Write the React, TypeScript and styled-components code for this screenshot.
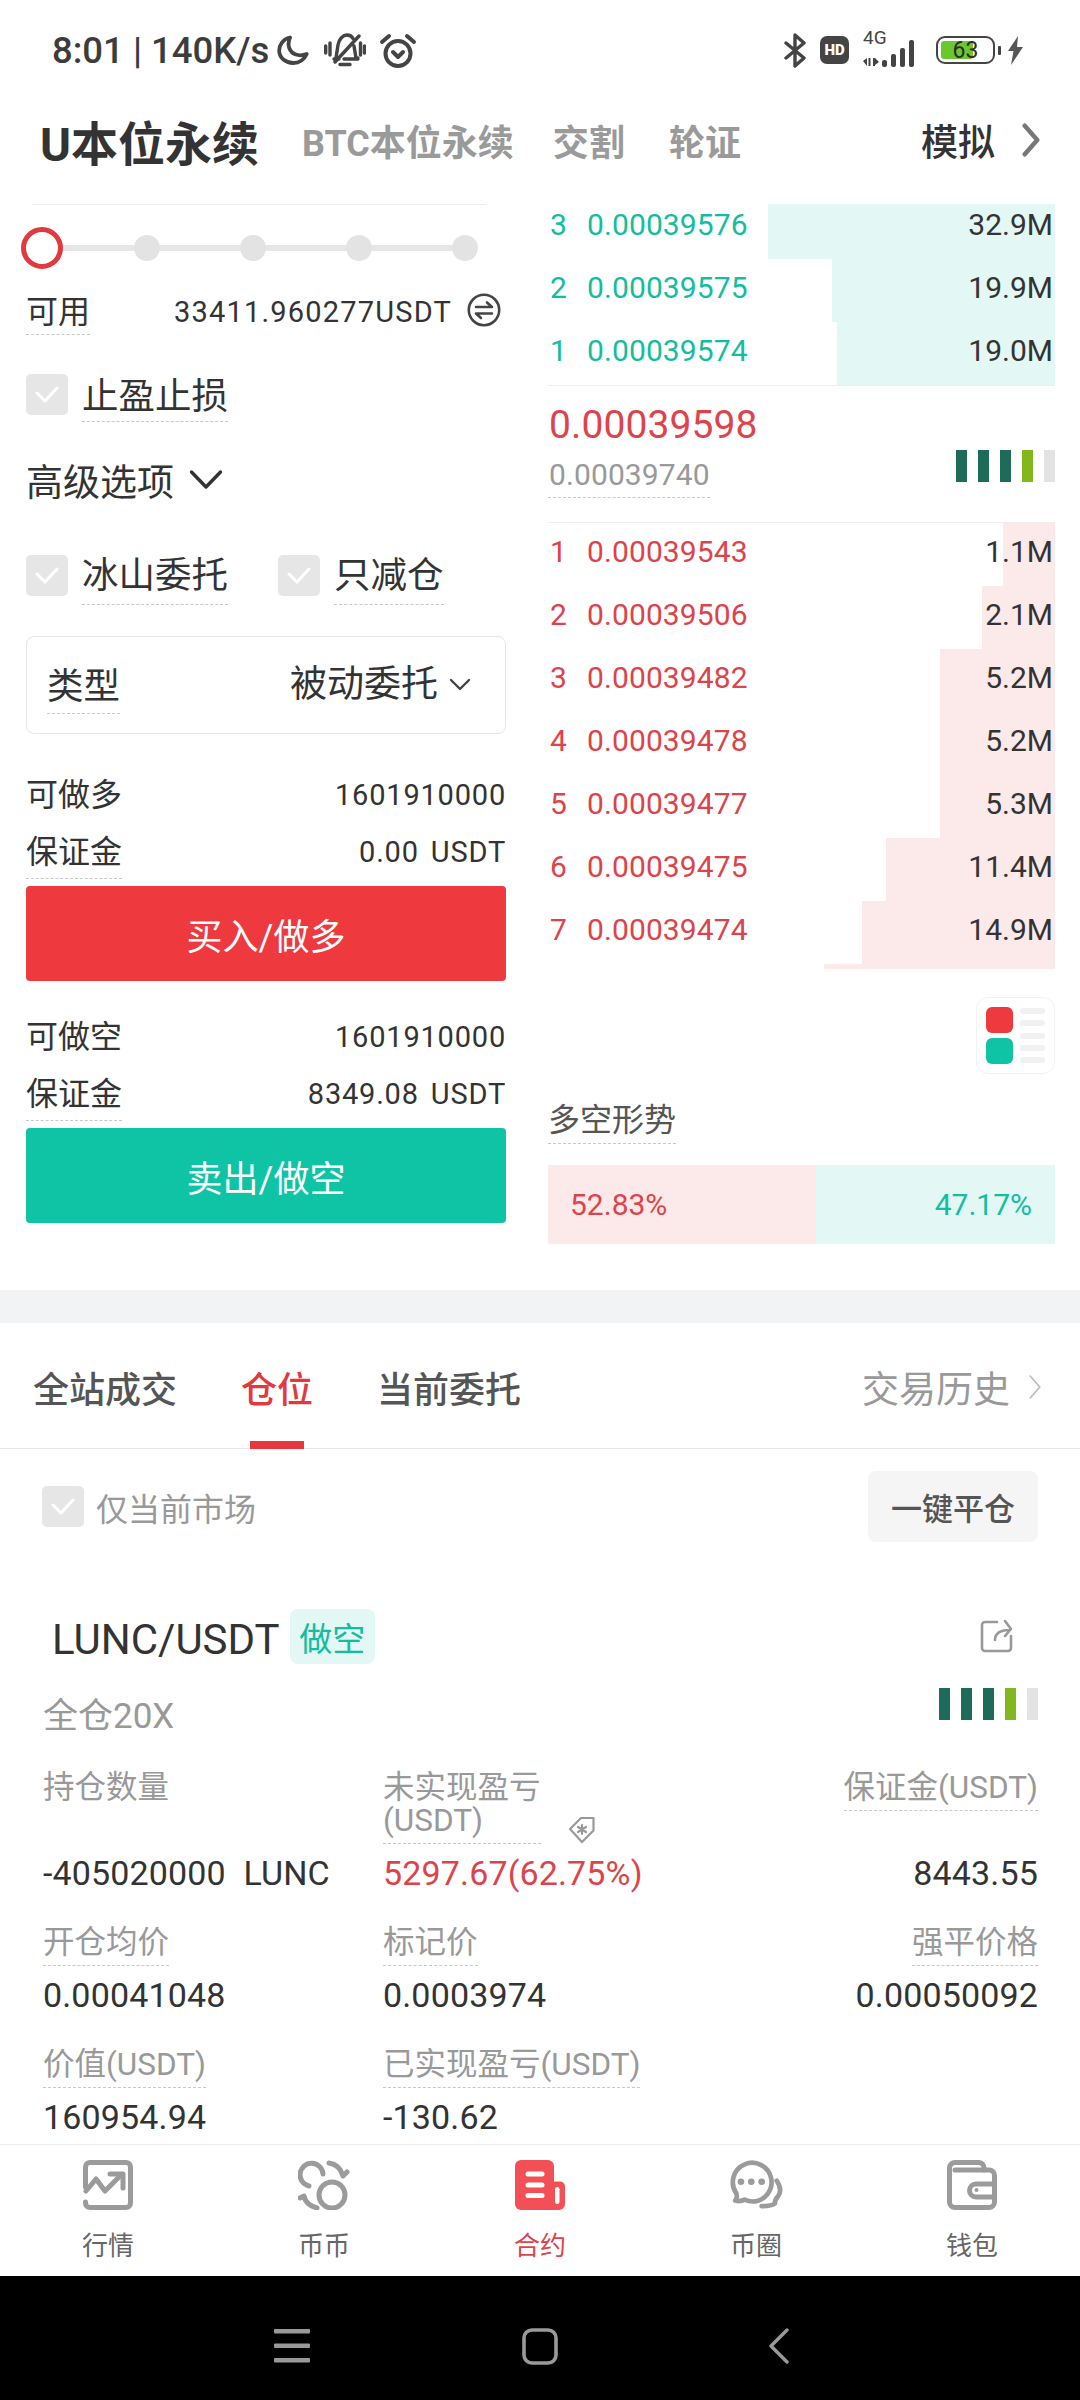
import { FC } from "react";
import styled, { createGlobalStyle } from "styled-components";

const red = "#dd434a";
const green = "#13bd9f";
const FONT = `Roboto, "Noto Sans CJK SC", sans-serif`;

const asks = [
  { n: 3, price: "0.00039576", vol: "32.9M", width: 287 },
  { n: 2, price: "0.00039575", vol: "19.9M", width: 223 },
  { n: 1, price: "0.00039574", vol: "19.0M", width: 218 },
];

const bids = [
  { n: 1, price: "0.00039543", vol: "1.1M", width: 52 },
  { n: 2, price: "0.00039506", vol: "2.1M", width: 73 },
  { n: 3, price: "0.00039482", vol: "5.2M", width: 115 },
  { n: 4, price: "0.00039478", vol: "5.2M", width: 115 },
  { n: 5, price: "0.00039477", vol: "5.3M", width: 115 },
  { n: 6, price: "0.00039475", vol: "11.4M", width: 169 },
  { n: 7, price: "0.00039474", vol: "14.9M", width: 193 },
];

const App: FC = () => {
  return (
    <Screen>
      <GlobalStyle />
      <StatusBar>
        <StatusLeft>
          <Clock>8:01 | 140K/s</Clock>
          <MoonIcon />
          <BellOffIcon />
          <AlarmIcon />
        </StatusLeft>
        <StatusRight>
          <BluetoothIcon />
          <HdBadge>HD</HdBadge>
          <Network>
            <NetLabel>4G</NetLabel>
            <SignalIcon />
          </Network>
          <Battery>
            <BatteryFill />
            <BatteryText>63</BatteryText>
          </Battery>
          <BatteryNub />
          <BoltIcon />
        </StatusRight>
      </StatusBar>

      <Header>
        <HeaderTitle>U本位永续</HeaderTitle>
        <HeaderTab>BTC本位永续</HeaderTab>
        <HeaderTab $mr={44}>交割</HeaderTab>
        <HeaderTab>轮证</HeaderTab>
        <Demo>模拟</Demo>
        <Chevron size={34} color="#777" width={5} />
      </Header>

      <Main>
        <LeftCol>
          <TopRule />
          <Slider>
            <SliderTrack />
            <SliderRing />
            <SliderDot />
            <SliderDot />
            <SliderDot />
            <SliderDot />
          </Slider>
          <AvailRow>
            <Dashed $lh={44}>可用</Dashed>
            <AvailValue>33411.960277USDT</AvailValue>
            <SwapIcon />
          </AvailRow>
          <CheckRow $mt={37}>
            <CheckBox><CheckIcon /></CheckBox>
            <Dashed $lh={48}>止盈止损</Dashed>
          </CheckRow>
          <Advanced>
            高级选项
            <AdvancedChevron />
          </Advanced>
          <CheckRow $mt={47}>
            <CheckBox $mt={3}><CheckIcon /></CheckBox>
            <Dashed $lh={48} $pad={4}>冰山委托</Dashed>
            <CheckBox $mt={3} $ml={50}><CheckIcon /></CheckBox>
            <Dashed $lh={48} $pad={4}>只减仓</Dashed>
          </CheckRow>
          <SelectBox>
            <Dashed $lh={44} $pad={4}>类型</Dashed>
            <SelectValue>
              被动委托
              <SmallChevron />
            </SelectValue>
          </SelectBox>
          <TradeBlock label="可做多" amount="0.00 USDT" action="买入/做多" color="#ee3a3f" first />
          <TradeBlock label="可做空" amount="8349.08 USDT" action="卖出/做空" color="#0fc4a4" />
        </LeftCol>

        <RightCol>
          <AskClip>
            {asks.map((row) => (
              <BookRow key={row.n} row={row} color={green} bar="#e3f7f4" />
            ))}
          </AskClip>
          <MidPrice>
            <div>
              <LastPrice>0.00039598</LastPrice>
              <MarkPrice>0.00039740</MarkPrice>
            </div>
            <SignalBars />
          </MidPrice>
          <BidList>
            {bids.map((row) => (
              <BookRow key={row.n} row={row} color={red} bar="#fce9ea" />
            ))}
            <BidTail />
          </BidList>
          <LayoutButton>
            <LayoutSquares>
              <LayoutSquare $color="#ee3a3f" />
              <LayoutSquare $color="#0fc4a4" />
            </LayoutSquares>
            <LayoutLines>
              <LayoutLine />
              <LayoutLine />
              <LayoutLine />
              <LayoutLine />
              <LayoutLine />
            </LayoutLines>
          </LayoutButton>
          <TrendTitle>多空形势</TrendTitle>
          <TrendBar>
            <TrendLong>52.83%</TrendLong>
            <TrendShort>47.17%</TrendShort>
          </TrendBar>
        </RightCol>
      </Main>

      <Band />

      <Positions>
        <Tabs>
          <Tab>全站成交</Tab>
          <Tab $active>仓位</Tab>
          <Tab>当前委托</Tab>
          <History>交易历史</History>
          <Chevron size={26} color="#bbb" width={2.5} />
        </Tabs>
        <FilterRow>
          <FilterLabel>
            <CheckBox><CheckIcon /></CheckBox>
            仅当前市场
          </FilterLabel>
          <CloseAll>一键平仓</CloseAll>
        </FilterRow>
        <Card>
          <CardTitleRow>
            <Symbol>LUNC/USDT</Symbol>
            <SideTag>做空</SideTag>
            <ShareIcon />
          </CardTitleRow>
          <MarginRow>
            <MarginText>全仓20X</MarginText>
            <SignalBars />
          </MarginRow>
          <StatGrid>
            <Stat>
              <StatLabel>持仓数量</StatLabel>
              <StatValue>-405020000 LUNC</StatValue>
            </Stat>
            <Stat>
              <StatLabelRow>
                <StatLabel $dashed>未实现盈亏<br />(USDT)</StatLabel>
                <TagIcon />
              </StatLabelRow>
              <StatValue $red>5297.67(62.75%)</StatValue>
            </Stat>
            <Stat $right>
              <StatLabel $dashed>保证金(USDT)</StatLabel>
              <StatValue>8443.55</StatValue>
            </Stat>

            <Stat>
              <StatLabel $dashed>开仓均价</StatLabel>
              <StatValue>0.00041048</StatValue>
            </Stat>
            <Stat>
              <StatLabel $dashed>标记价</StatLabel>
              <StatValue>0.0003974</StatValue>
            </Stat>
            <Stat $right>
              <StatLabel $dashed>强平价格</StatLabel>
              <StatValue>0.00050092</StatValue>
            </Stat>

            <Stat>
              <StatLabel $dashed>价值(USDT)</StatLabel>
              <StatValue>160954.94</StatValue>
            </Stat>
            <Stat>
              <StatLabel $dashed>已实现盈亏(USDT)</StatLabel>
              <StatValue>-130.62</StatValue>
            </Stat>
          </StatGrid>
        </Card>
      </Positions>

      <TabBar>
        <TabItem><MarketIcon /><TabLabel>行情</TabLabel></TabItem>
        <TabItem><CoinIcon /><TabLabel>币币</TabLabel></TabItem>
        <TabItem><ContractIcon /><TabLabel $active>合约</TabLabel></TabItem>
        <TabItem><ChatIcon /><TabLabel>币圈</TabLabel></TabItem>
        <TabItem><WalletIcon /><TabLabel>钱包</TabLabel></TabItem>
      </TabBar>

      <NavBar>
        <NavMenuIcon />
        <NavHomeIcon />
        <NavBackIcon />
      </NavBar>
    </Screen>
  );
};

interface BookRowProps {
  row: { n: number; price: string; vol: string; width: number };
  color: string;
  bar: string;
}

const BookRow: FC<BookRowProps> = ({ row, color, bar }) => (
  <RowWrap>
    <RowBar style={{ width: row.width, background: bar }} />
    <RowIndex style={{ color }}>{row.n}</RowIndex>
    <RowPrice style={{ color }}>{row.price}</RowPrice>
    <RowVol>{row.vol}</RowVol>
  </RowWrap>
);

interface TradeBlockProps {
  label: string;
  amount: string;
  action: string;
  color: string;
  first?: boolean;
}

const TradeBlock: FC<TradeBlockProps> = ({ label, amount, action, color, first }) => (
  <TradeWrap $first={first}>
    <TradeRow>
      <TradeLabel>{label}</TradeLabel>
      <TradeValue>1601910000</TradeValue>
    </TradeRow>
    <TradeRow $mt={13}>
      <Dashed $lh={44} $pad={4} $size={32}>保证金</Dashed>
      <TradeValue>{amount}</TradeValue>
    </TradeRow>
    <ActionButton $color={color}>{action}</ActionButton>
  </TradeWrap>
);

/* icons */

const Chevron: FC<{ size: number; color: string; width: number }> = ({ size, color, width }) => (
  <ChevronSvg $size={size} viewBox="0 0 20 38" fill="none" stroke={color} strokeWidth={width} strokeLinecap="round" strokeLinejoin="round">
    <path d="M3 3 L17 19 L3 35" />
  </ChevronSvg>
);

const MoonIcon = () => (
  <IconSvg $ml={8} width="32" height="30" viewBox="0 0 32 30" fill="none" stroke="#444" strokeWidth="3.8" strokeLinejoin="round">
    <path d="M13 2.500C6 4 2 10 2.200 16c.3 7.500 7 12 14 12 6 0 11-3.500 13.500-9-8 3-15 .5-17.500-6C11 9.500 11.500 6 13 2.500Z" />
  </IconSvg>
);

const BellOffIcon = () => (
  <IconSvg $ml={15} width="42" height="34" viewBox="0 0 42 34" fill="none" stroke="#444" strokeWidth="3.4" strokeLinecap="round">
    <path d="M12 25 L14 12C15 6 19 2 23 2c3 0 5 1.500 6 3.500M30 13l2 12h2M10 26h5M20 26h14M16 31.500h10M11 29 L35 3M1.700 13v7M6 10v12M36.500 10v12M40.500 13v7" />
  </IconSvg>
);

const AlarmIcon = () => (
  <IconSvg $ml={13} width="38" height="35" viewBox="0 0 38 35" fill="none" stroke="#444" strokeWidth="4" strokeLinecap="round" strokeLinejoin="round">
    <circle cx="19" cy="20.500" r="12.500" />
    <path d="M14 19l5 5 5-5M3 9l7-6M28 3l7 6" />
  </IconSvg>
);

const BluetoothIcon = () => (
  <IconSvg width="23" height="35" viewBox="0 0 23 35" fill="none" stroke="#444" strokeWidth="3.4" strokeLinejoin="round" strokeLinecap="round">
    <path d="M2 10 L20 25 L11 33 V2 L20 10 L2 25" />
  </IconSvg>
);

const SignalIcon = () => (
  <svg width="60" height="28" viewBox="0 0 60 28" fill="#444">
    <path d="M1 21l4-3v8zM6.500 18h2v8h-2zM11 18h2v8h-2zM13 18l4 4-4 3z" />
    <rect x="20" y="20" width="5" height="7" rx="2" />
    <rect x="29" y="14" width="5" height="13" rx="2" />
    <rect x="38" y="8" width="5" height="19" rx="2" />
    <rect x="47" y="0" width="5" height="27" rx="2" />
  </svg>
);

const BoltIcon = () => (
  <IconSvg $ml={6} width="17" height="29" viewBox="0 0 17 29" fill="#555">
    <path d="M11 0 L1 15 L6.500 15 L4 29 L16 11 L10 11 Z" />
  </IconSvg>
);

const SwapIcon = () => (
  <IconSvg $ml={15} width="34" height="34" viewBox="0 0 34 34" fill="none" stroke="#444" strokeWidth="2.600" strokeLinecap="round" strokeLinejoin="round">
    <circle cx="17" cy="17" r="15.200" />
    <path d="M9 14h16l-5-4.500M25 20.500H9l5 4.500" />
  </IconSvg>
);

const CheckIcon = () => (
  <svg width="24" height="18" viewBox="0 0 24 18" fill="none" stroke="#fff" strokeWidth="3" strokeLinecap="round" strokeLinejoin="round">
    <path d="M2 7l8 8L22 2" />
  </svg>
);

const AdvancedChevron = () => (
  <IconSvg $ml={15} width="34" height="22" viewBox="0 0 34 22" fill="none" stroke="#333" strokeWidth="3.400" strokeLinecap="round" strokeLinejoin="round">
    <path d="M2.500 3l14.500 15L31.500 3" />
  </IconSvg>
);

const SmallChevron = () => (
  <IconSvg $ml={11} width="22" height="14" viewBox="0 0 22 14" fill="none" stroke="#444" strokeWidth="2.400" strokeLinecap="round" strokeLinejoin="round">
    <path d="M2 2l9 9 9-9" />
  </IconSvg>
);

const SignalBars = () => (
  <Bars>
    <Bar $color="#1f6b5a" />
    <Bar $color="#1f6b5a" />
    <Bar $color="#1f6b5a" />
    <Bar $color="#82b81e" />
    <Bar $color="#e3e3e3" />
  </Bars>
);

const ShareIcon = () => (
  <ShareSvg width="34" height="34" viewBox="0 0 34 34" fill="none" stroke="#999" strokeWidth="2.600" strokeLinecap="round" strokeLinejoin="round">
    <path d="M17 3H5a3 3 0 0 0-3 3v23a3 3 0 0 0 3 3h23a3 3 0 0 0 3-3V17M15 21c0-7 5-10 15-10M25 2l6 8-6 7" />
  </ShareSvg>
);

const TagIcon = () => (
  <TagSvg width="30" height="30" viewBox="0 0 30 30" fill="none" stroke="#999" strokeWidth="2.200" strokeLinecap="round" strokeLinejoin="round">
    <path d="M3 15 L14 4h12.500v12.500L15 28 Z" />
    <path d="M15 11v9M11 13l8 5M19 13l-8 5" />
  </TagSvg>
);

const MarketIcon = () => (
  <svg width="50" height="50" viewBox="0 0 50 50" fill="none" stroke="#9b9b9b" strokeWidth="5" strokeLinecap="round" strokeLinejoin="round">
    <path d="M2.500 27V7A4.500 4.500 0 0 1 7 2.500h36A4.500 4.500 0 0 1 47.500 7v36a4.500 4.500 0 0 1-4.500 4.500H7A4.500 4.500 0 0 1 2.500 43v-1" />
    <path d="M3 31l10-12 9 12 16-16" />
    <path d="M27 14h13v14" />
  </svg>
);

const CoinIcon = () => (
  <svg width="52" height="50" viewBox="0 0 52 50" fill="none" stroke="#9b9b9b" strokeWidth="5" strokeLinecap="round" strokeLinejoin="round">
    <circle cx="34" cy="35" r="13" />
    <path d="M25 14A11.500 11.500 0 1 0 11 26" />
    <path d="M31 3c7 1 12 6 14 13l4-4" />
    <path d="M2 38l4-2c1 6 6 10 13 12" />
  </svg>
);

const ContractIcon = () => (
  <svg width="50" height="50" viewBox="0 0 50 50" fill="#f25056">
    <path d="M6 0h27a6 6 0 0 1 6 6v15.500h6a5 5 0 0 1 5 5V44a6 6 0 0 1-6 6H6a6 6 0 0 1-6-6V6a6 6 0 0 1 6-6Z" />
    <g fill="#fff">
      <rect x="10.500" y="11.500" width="19" height="5" rx="2.500" />
      <rect x="10.500" y="22.500" width="19" height="5" rx="2.500" />
      <rect x="10.500" y="33" width="19" height="5" rx="2.500" />
      <rect x="40" y="27" width="4.500" height="17" rx="2.200" />
    </g>
  </svg>
);

const ChatIcon = () => (
  <svg width="58" height="53" viewBox="0 0 58 53" fill="none" stroke="#9b9b9b" strokeWidth="5" strokeLinecap="round" strokeLinejoin="round">
    <path d="M7 43c4 1 8 0 10-1 2 1 5 2 8 2a20.500 20.500 0 1 0-17-9c1 3 1 6-1 8Z" />
    <path d="M51 22c4 6 5 12 1 17-2 2-3 5-3 7-2 2-8 3-14 3" />
    <g fill="#9b9b9b" stroke="none">
      <circle cx="13" cy="23" r="3.500" />
      <circle cx="24" cy="23" r="3.500" />
      <circle cx="35" cy="23" r="3.500" />
    </g>
  </svg>
);

const WalletIcon = () => (
  <svg width="50" height="50" viewBox="0 0 50 50" fill="none" stroke="#9b9b9b" strokeWidth="5" strokeLinecap="round" strokeLinejoin="round">
    <path d="M2.500 14V8A5.500 5.500 0 0 1 8 2.500h24A5.500 5.500 0 0 1 37 8v2" />
    <path d="M8 10h34a5.500 5.500 0 0 1 5.500 5.500V42a5.500 5.500 0 0 1-5.500 5.500H8A5.500 5.500 0 0 1 2.500 42V14" />
    <path d="M47 24H29a6.500 6.500 0 0 0 0 13h18" />
    <circle cx="29.500" cy="30" r="2" fill="#9b9b9b" stroke="none" />
  </svg>
);

const NavMenuIcon = () => (
  <svg width="36" height="36" viewBox="0 0 36 36" fill="#999">
    <rect x="0" y="1" width="36" height="4.500" rx="1" />
    <rect x="0" y="15.500" width="36" height="4.500" rx="1" />
    <rect x="0" y="30" width="36" height="4.500" rx="1" />
  </svg>
);

const NavHomeIcon = () => (
  <svg width="36" height="37" viewBox="0 0 36 37" fill="none" stroke="#999" strokeWidth="3.600">
    <rect x="2" y="2" width="32" height="33" rx="8" />
  </svg>
);

const NavBackIcon = () => (
  <svg width="20" height="36" viewBox="0 0 20 36" fill="none" stroke="#999" strokeWidth="3.400" strokeLinecap="round" strokeLinejoin="round">
    <path d="M18 2 L2 18 L18 34" />
  </svg>
);

/* styles */

const GlobalStyle = createGlobalStyle`
  html, body {
    margin: 0;
    padding: 0;
    background: #fff;
  }
  * {
    box-sizing: border-box;
  }
`;

const Screen = styled.div`
  width: 1080px;
  height: 2400px;
  display: flex;
  flex-direction: column;
  overflow: hidden;
  background: #fff;
  color: #333;
  font-family: ${FONT};
`;

const StatusBar = styled.div`
  height: 85px;
  flex: none;
  display: flex;
  align-items: center;
  justify-content: space-between;
  padding: 15px 56px 0 52px;
`;

const StatusLeft = styled.div`
  display: flex;
  align-items: center;
`;

const StatusRight = styled.div`
  display: flex;
  align-items: center;
`;

const Clock = styled.span`
  font-size: 36.5px;
  font-weight: 500;
  color: #3c3c3c;
  white-space: nowrap;
`;

const IconSvg = styled.svg<{ $ml?: number }>`
  flex: none;
  margin-left: ${({ $ml }) => $ml ?? 0}px;
`;

const HdBadge = styled.span`
  width: 29px;
  height: 28px;
  margin-left: 13px;
  border-radius: 7px;
  background: #444;
  color: #fff;
  font-size: 15px;
  font-weight: 900;
  display: flex;
  align-items: center;
  justify-content: center;
`;

const Network = styled.div`
  position: relative;
  width: 60px;
  height: 36px;
  margin-left: 13px;
  display: flex;
  align-items: flex-end;
`;

const NetLabel = styled.span`
  position: absolute;
  left: 1px;
  top: -4px;
  font-size: 19px;
  line-height: 19px;
  color: #444;
`;

const Battery = styled.div`
  position: relative;
  width: 59px;
  height: 28px;
  margin-left: 14px;
  border: 2.5px solid #444;
  border-radius: 9px;
  overflow: hidden;
  display: flex;
  align-items: center;
  justify-content: center;
`;

const BatteryFill = styled.span`
  position: absolute;
  left: 3px;
  top: 3px;
  bottom: 3px;
  width: 32px;
  border-radius: 3px;
  background: #6cc72c;
`;

const BatteryText = styled.span`
  position: relative;
  font-size: 23px;
  line-height: 23px;
  color: #2b2b2b;
`;

const BatteryNub = styled.span`
  width: 3px;
  height: 9px;
  margin-left: 3px;
  background: #444;
  border-radius: 1px;
`;

const Header = styled.div`
  height: 119px;
  flex: none;
  display: flex;
  align-items: center;
  padding: 0 40px 9px 40px;
`;

const HeaderTitle = styled.span`
  font-size: 47px;
  font-weight: 700;
  color: #333;
  margin-right: 43px;
  white-space: nowrap;
`;

const HeaderTab = styled.span<{ $mr?: number }>`
  font-size: 36px;
  font-weight: 700;
  color: #9a9a9a;
  margin-right: ${({ $mr }) => $mr ?? 39}px;
  white-space: nowrap;
`;

const Demo = styled.span`
  margin-left: auto;
  margin-right: 27px;
  font-size: 37px;
  font-weight: 500;
  color: #333;
`;

const ChevronSvg = styled.svg<{ $size: number }>`
  flex: none;
  height: ${({ $size }) => $size}px;
  width: ${({ $size }) => Math.round(($size * 20) / 38)}px;
`;

const Main = styled.div`
  height: 1086px;
  flex: none;
  display: flex;
  padding-left: 26px;
`;

const LeftCol = styled.div`
  width: 480px;
  flex: none;
  display: flex;
  flex-direction: column;
`;

const RightCol = styled.div`
  width: 507px;
  flex: none;
  margin-left: 42px;
  display: flex;
  flex-direction: column;
`;

const TopRule = styled.div`
  height: 1px;
  margin: 0 20px 0 6px;
  background: #eee;
`;

const Slider = styled.div`
  position: relative;
  height: 42px;
  margin: 22px 0 0 -5px;
  display: flex;
  align-items: center;
  gap: 80px;
`;

const SliderTrack = styled.span`
  position: absolute;
  left: 20px;
  width: 420px;
  top: 18px;
  height: 6px;
  background: #e6e6e6;
`;

const SliderRing = styled.span`
  position: relative;
  width: 42px;
  height: 42px;
  margin-right: -9px;
  border-radius: 50%;
  border: 5px solid #e0393f;
  background: #fff;
`;

const SliderDot = styled.span`
  position: relative;
  width: 26px;
  height: 26px;
  border-radius: 50%;
  background: #e3e3e3;
`;

const Dashed = styled.span<{ $lh: number; $pad?: number; $size?: number }>`
  display: inline-block;
  flex: none;
  font-size: ${({ $size }) => $size ?? 36.5}px;
  line-height: ${({ $lh }) => $lh}px;
  padding-bottom: ${({ $pad }) => $pad ?? 0}px;
  color: #333;
  border-bottom: 1px dashed #c8c8c8;
  white-space: nowrap;
`;

const AvailRow = styled.div`
  height: 46px;
  margin-top: 21px;
  display: flex;
  align-items: flex-start;
  padding-right: 5px;

  ${Dashed} {
    font-size: 32px;
  }

  svg {
    margin-top: 3px;
  }
`;

const AvailValue = styled.span`
  margin-left: auto;
  margin-top: 2px;
  font-size: 29px;
  line-height: 40px;
  letter-spacing: 1.2px;
  color: #333;
`;

const CheckRow = styled.div<{ $mt: number }>`
  margin-top: ${({ $mt }) => $mt}px;
  display: flex;
  align-items: flex-start;
`;

const CheckBox = styled.span<{ $mt?: number; $ml?: number }>`
  width: 42px;
  height: 41px;
  flex: none;
  margin: ${({ $mt }) => $mt ?? 1}px 14px 0 ${({ $ml }) => $ml ?? 0}px;
  border-radius: 5px;
  background: #e6e6e6;
  display: flex;
  align-items: center;
  justify-content: center;
`;

const Advanced = styled.div`
  margin-top: 33px;
  height: 50px;
  display: flex;
  align-items: center;
  font-size: 37px;
  color: #333;
`;

const SelectBox = styled.div`
  height: 98px;
  margin-top: 31px;
  padding: 0 34px 0 20px;
  border: 1px solid #e6e6e6;
  border-radius: 8px;
  display: flex;
  align-items: flex-start;
  justify-content: space-between;

  ${Dashed} {
    margin-top: 28px;
  }
`;

const SelectValue = styled.span`
  margin-top: 26px;
  display: flex;
  align-items: center;
  font-size: 37px;
  line-height: 44px;
  color: #333;
`;

const TradeWrap = styled.div<{ $first?: boolean }>`
  margin-top: ${({ $first }) => ($first ? 39 : 34)}px;
`;

const TradeRow = styled.div<{ $mt?: number }>`
  margin-top: ${({ $mt }) => $mt ?? 0}px;
  min-height: 44px;
  display: flex;
  align-items: flex-start;
  justify-content: space-between;
`;

const TradeLabel = styled.span`
  font-size: 32px;
  line-height: 44px;
  color: #333;
`;

const TradeValue = styled.span`
  font-size: 29px;
  line-height: 44px;
  letter-spacing: 0.8px;
  word-spacing: 4px;
  color: #333;
`;

const ActionButton = styled.button<{ $color: string }>`
  display: block;
  width: 480px;
  height: 95px;
  margin-top: 7px;
  border: none;
  border-radius: 4px;
  background: ${({ $color }) => $color};
  color: #fff;
  font-family: ${FONT};
  font-size: 36px;
`;

const AskClip = styled.div`
  height: 181px;
  overflow: hidden;
  display: flex;
  flex-direction: column;
  justify-content: flex-end;
  flex: none;
`;

const RowWrap = styled.div`
  position: relative;
  height: 63px;
  flex: none;
  display: flex;
  align-items: center;
  padding-bottom: 7px;
`;

const RowBar = styled.span`
  position: absolute;
  right: 0;
  top: 0;
  bottom: 0;
`;

const RowIndex = styled.span`
  position: relative;
  width: 39px;
  padding-left: 2px;
  font-size: 30px;
`;

const RowPrice = styled.span`
  position: relative;
  font-size: 30px;
  letter-spacing: 0.1px;
`;

const RowVol = styled.span`
  position: relative;
  margin-left: auto;
  padding-right: 2px;
  font-size: 30px;
  color: #333;
`;

const MidPrice = styled.div`
  height: 138px;
  flex: none;
  padding-top: 16px;
  border-top: 1px solid #efefef;
  border-bottom: 1px solid #efefef;
  display: flex;
  justify-content: space-between;
  align-items: flex-start;
`;

const LastPrice = styled.div`
  font-size: 39px;
  line-height: 46px;
  letter-spacing: 0.1px;
  color: ${red};
  padding-left: 1px;
`;

const MarkPrice = styled.div`
  display: inline-block;
  margin-top: 5px;
  font-size: 30px;
  line-height: 44px;
  letter-spacing: 0.1px;
  color: #999;
  border-bottom: 1px dashed #c8c8c8;
  padding-left: 1px;
`;

const Bars = styled.div`
  display: flex;
  gap: 11px;
  margin-top: 48px;
`;

const Bar = styled.span<{ $color: string }>`
  width: 11px;
  height: 32px;
  background: ${({ $color }) => $color};
`;

const BidList = styled.div`
  flex: none;
  display: flex;
  flex-direction: column;
`;

const BidTail = styled.div`
  align-self: flex-end;
  width: 231px;
  height: 5px;
  background: #fce9ea;
`;

const LayoutButton = styled.div`
  align-self: flex-end;
  width: 79px;
  height: 77px;
  margin-top: 28px;
  padding: 9px;
  border: 1px solid #f2f2f2;
  border-radius: 12px;
  display: flex;
  gap: 7px;
`;

const LayoutSquares = styled.div`
  display: flex;
  flex-direction: column;
  justify-content: space-between;
`;

const LayoutSquare = styled.span<{ $color: string }>`
  width: 27px;
  height: 26px;
  border-radius: 6px;
  background: ${({ $color }) => $color};
`;

const LayoutLines = styled.div`
  flex: 1;
  padding: 1px 0;
  display: flex;
  flex-direction: column;
  justify-content: space-between;
`;

const LayoutLine = styled.span`
  height: 6px;
  border-radius: 3px;
  background: #f1f1f1;
`;

const TrendTitle = styled.span`
  align-self: flex-start;
  margin-top: 24px;
  padding-bottom: 1px;
  font-size: 32px;
  line-height: 44px;
  color: #555;
  border-bottom: 1px dashed #c8c8c8;
`;

const TrendBar = styled.div`
  height: 79px;
  margin-top: 21px;
  display: flex;
  font-size: 30px;
`;

const TrendLong = styled.div`
  width: 268px;
  padding-left: 22px;
  display: flex;
  align-items: center;
  background: #fce9ea;
  color: ${red};
`;

const TrendShort = styled.div`
  flex: 1;
  padding-right: 23px;
  display: flex;
  align-items: center;
  justify-content: flex-end;
  background: #e3f7f4;
  color: ${green};
`;

const Band = styled.div`
  height: 33px;
  flex: none;
  background: #f2f3f5;
`;

const Positions = styled.div`
  flex: 1;
  min-height: 0;
  overflow: hidden;
`;

const Tabs = styled.div`
  height: 126px;
  padding: 2px 38px 0 33px;
  display: flex;
  align-items: center;
  gap: 64px;
  border-bottom: 1px solid #e6e6e6;
`;

const Tab = styled.span<{ $active?: boolean }>`
  position: relative;
  align-self: stretch;
  display: flex;
  align-items: center;
  font-size: 36px;
  font-weight: 500;
  color: ${({ $active }) => ($active ? "#e0393f" : "#555")};

  &::after {
    content: "";
    display: ${({ $active }) => ($active ? "block" : "none")};
    position: absolute;
    left: 9px;
    right: 9px;
    bottom: -1px;
    height: 8px;
    background: #e8383e;
  }
`;

const History = styled.span`
  margin-left: auto;
  margin-right: -46px;
  font-size: 37px;
  color: #999;
`;

const FilterRow = styled.div`
  padding: 22px 42px 0;
  display: flex;
  align-items: center;
  justify-content: space-between;
`;

const FilterLabel = styled.span`
  display: flex;
  align-items: center;
  font-size: 32px;
  color: #999;

  ${CheckBox} {
    margin: 0 12px 0 0;
  }
`;

const CloseAll = styled.button`
  width: 170px;
  height: 71px;
  border: none;
  border-radius: 8px;
  background: #f5f5f5;
  color: #555;
  font-family: ${FONT};
  font-size: 31px;
  font-weight: 500;
`;

const Card = styled.div`
  padding: 67px 42px 0 43px;
`;

const CardTitleRow = styled.div`
  height: 55px;
  display: flex;
  align-items: center;
`;

const Symbol = styled.span`
  margin-left: 9px;
  padding-top: 5px;
  font-size: 42px;
  color: #333;
`;

const SideTag = styled.span`
  margin-left: 10px;
  width: 85px;
  height: 55px;
  border-radius: 8px;
  background: #e3f7f4;
  color: ${green};
  font-size: 33px;
  display: flex;
  align-items: center;
  justify-content: center;
`;

const ShareSvg = styled.svg`
  flex: none;
  margin-left: auto;
  margin-right: 24px;
  margin-top: -2px;
`;

const MarginRow = styled.div`
  height: 52px;
  margin-top: 24px;
  display: flex;
  justify-content: space-between;

  ${Bars} {
    margin-top: 0;
  }
`;

const MarginText = styled.span`
  margin-top: 7px;
  font-size: 35px;
  line-height: 44px;
  color: #999;
`;

const StatGrid = styled.div`
  margin-top: 31px;
  display: grid;
  grid-template-columns: 340px 1fr 320px;
  row-gap: 31px;
`;

const Stat = styled.div<{ $right?: boolean }>`
  display: flex;
  flex-direction: column;
  justify-content: space-between;
  gap: 7px;
  align-items: ${({ $right }) => ($right ? "flex-end" : "flex-start")};
`;

const StatLabelRow = styled.div`
  display: flex;
  align-items: flex-end;
`;

const StatLabel = styled.span<{ $dashed?: boolean }>`
  font-size: 31.5px;
  line-height: 33px;
  color: #999;
  white-space: nowrap;
  padding-bottom: ${({ $dashed }) => ($dashed ? 6 : 0)}px;
  border-bottom: ${({ $dashed }) => ($dashed ? "1px dashed #c8c8c8" : "none")};
`;

const TagSvg = styled.svg`
  flex: none;
  margin-left: 26px;
`;

const StatValue = styled.span<{ $red?: boolean }>`
  font-size: 34px;
  line-height: 44px;
  letter-spacing: 0.15px;
  word-spacing: 9px;
  color: ${({ $red }) => ($red ? red : "#333")};
  white-space: nowrap;
`;

const TabBar = styled.div`
  height: 132px;
  flex: none;
  background: #fff;
  border-top: 1px solid #eee;
  display: grid;
  grid-template-columns: repeat(5, 1fr);
`;

const TabItem = styled.div`
  height: 131px;
  padding-top: 15px;
  display: flex;
  flex-direction: column;
  align-items: center;

  svg {
    height: 50px;
  }
`;

const TabLabel = styled.span<{ $active?: boolean }>`
  margin-top: 19px;
  font-size: 26px;
  line-height: 34px;
  color: ${({ $active }) => ($active ? red : "#666")};
`;

const NavBar = styled.div`
  height: 124px;
  flex: none;
  background: #000;
  padding: 16px 291px 0 274px;
  display: flex;
  align-items: center;
  justify-content: space-between;
`;

export default App;
